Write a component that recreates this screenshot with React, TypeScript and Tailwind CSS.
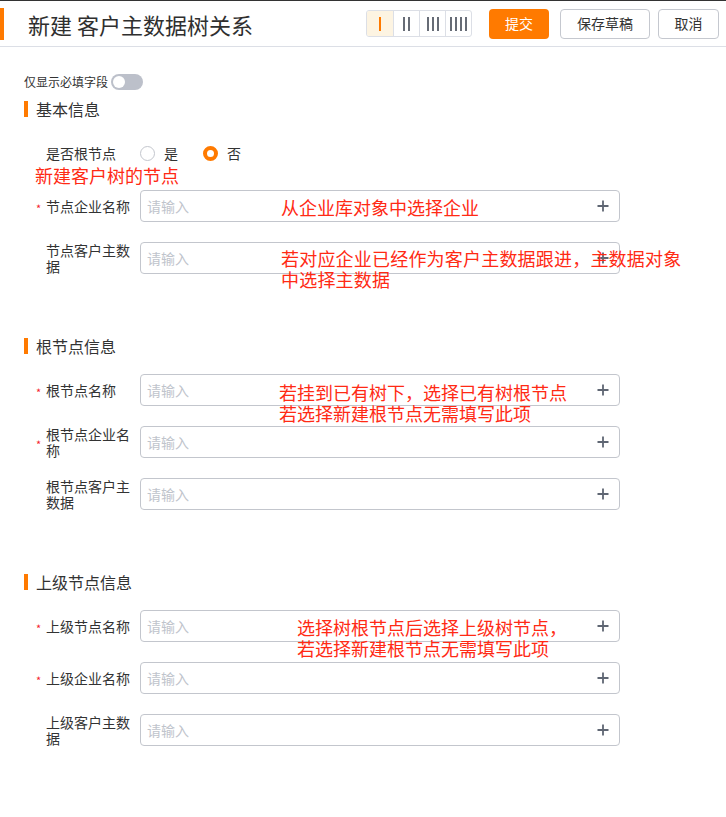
import React from 'react';

type Field = { label: string; required?: boolean };

const sections: { title: string; fields: Field[] }[] = [
  {
    title: '根节点信息',
    fields: [
      { label: '根节点名称', required: true },
      { label: '根节点企业名称', required: true },
      { label: '根节点客户主数据' },
    ],
  },
  {
    title: '上级节点信息',
    fields: [
      { label: '上级节点名称', required: true },
      { label: '上级企业名称', required: true },
      { label: '上级客户主数据' },
    ],
  },
];

function PlusIcon() {
  return (
    <svg width="12" height="12" viewBox="0 0 12 12" className="text-[#5f6673]">
      <path d="M6 0.5v11M0.5 6h11" stroke="currentColor" strokeWidth="1.8" fill="none" />
    </svg>
  );
}

function Label({ text, required }: { text: string; required?: boolean }) {
  return (
    <div className="w-[104px] flex items-center shrink-0">
      <span className="w-[10px] text-[11px] text-[#f5222d] leading-none translate-y-[2px]">{required ? '*' : ''}</span>
      <span className="w-[86px] text-[14px] leading-[16px] text-[#333]">{text}</span>
    </div>
  );
}

function InputRow({ field }: { field: Field }) {
  return (
    <div className="flex items-center h-[32px] mb-[20px]">
      <Label text={field.label} required={field.required} />
      <div className="w-[480px] h-[32px] border border-[#c3c6cd] rounded-[4px] flex items-center justify-between pl-[6px] pr-[10px]">
        <span className="text-[14px] text-[#c0c4cc]">请输入</span>
        <PlusIcon />
      </div>
    </div>
  );
}

function SectionTitle({ title, className }: { title: string; className?: string }) {
  return (
    <div className={`flex items-center h-[24px] ${className ?? ''}`}>
      <div className="w-[4px] h-[16px] bg-[#ff7a00]" />
      <span className="ml-[8px] text-[16px] text-[#333]">{title}</span>
    </div>
  );
}

function Bars({ n, active }: { n: number; active?: boolean }) {
  return (
    <div className="flex gap-[3px]">
      {Array.from({ length: n }).map((_, i) => (
        <div key={i} className={`w-[2px] h-[14px] ${active ? 'bg-[#ff7a00]' : 'bg-[#676c76]'}`} />
      ))}
    </div>
  );
}

export default function App() {
  return (
    <div className="relative min-h-screen bg-white font-['Noto_Sans_CJK_SC',sans-serif] text-[#333]">
      {/* header */}
      <div className="h-[47px] border-t border-t-[#333] border-b border-b-[#dcdfe6] flex items-center">
        <div className="w-[4px] h-[32px] bg-[#ff7a00]" />
        <h1 className="ml-[24px] text-[22px] text-[#2f2f2f] leading-none">新建 客户主数据树关系</h1>
        <div className="flex-1" />
        <div className="flex h-[27px] border border-[#dcdfe6] rounded-[3px] overflow-hidden">
          <div className="w-[26px] flex items-center justify-center bg-[#fdf4e2]">
            <Bars n={1} active />
          </div>
          <div className="w-[26px] flex items-center justify-center border-l border-[#dcdfe6]">
            <Bars n={2} />
          </div>
          <div className="w-[26px] flex items-center justify-center border-l border-[#dcdfe6]">
            <Bars n={3} />
          </div>
          <div className="w-[26px] flex items-center justify-center border-l border-[#dcdfe6]">
            <Bars n={4} />
          </div>
        </div>
        <button className="ml-[17px] w-[60px] h-[30px] rounded-[4px] bg-[#ff7a00] text-white text-[14px]">提交</button>
        <button className="ml-[11px] w-[90px] h-[30px] rounded-[4px] border border-[#c5c8cf] text-[#333] text-[14px]">保存草稿</button>
        <button className="ml-[8px] mr-[7px] w-[61px] h-[30px] rounded-[4px] border border-[#c5c8cf] text-[#333] text-[14px]">取消</button>
      </div>

      <div className="pl-[24px]">
        <div className="mt-[27px] h-[16px] flex items-center">
          <span className="text-[12px] text-[#333]">仅显示必填字段</span>
          <div className="ml-[3px] w-[32px] h-[16px] rounded-full bg-[#bcc0ca] flex items-center px-[2px]">
            <div className="w-[12px] h-[12px] rounded-full bg-white" />
          </div>
        </div>

        <SectionTitle title="基本信息" className="mt-[7px]" />
        <div className="mt-[16px] pl-[12px]">
          <div className="flex items-center h-[32px] mb-[21px]">
            <Label text="是否根节点" />
            <div className="flex items-center">
              <div className="w-[15px] h-[15px] rounded-full border border-[#c3c6cd]" />
              <span className="ml-[9px] text-[14px]">是</span>
              <div className="ml-[25px] w-[15px] h-[15px] rounded-full border-[4px] border-[#ff7a00] bg-white" />
              <span className="ml-[9px] text-[14px]">否</span>
            </div>
          </div>
          <InputRow field={{ label: '节点企业名称', required: true }} />
          <InputRow field={{ label: '节点客户主数据' }} />
        </div>

        {sections.map((s) => (
          <div key={s.title}>
            <SectionTitle title={s.title} className="mt-[60px]" />
            <div className="mt-[16px] pl-[12px]">
              {s.fields.map((f) => (
                <InputRow key={f.label} field={f} />
              ))}
            </div>
          </div>
        ))}
        <div className="h-[50px]" />
      </div>

      {/* red annotations */}
      <div className="absolute left-[35px] top-[165px] text-[18px] leading-[21px] text-[#ff2a14]">新建客户树的节点</div>
      <div className="absolute left-[281px] top-[197px] text-[18px] leading-[21px] text-[#ff2a14]">从企业库对象中选择企业</div>
      <div className="absolute left-[281px] top-[248px] text-[18px] leading-[21px] text-[#ff2a14] tracking-[0.2px]">
        若对应企业已经作为客户主数据跟进，主数据对象
        <br />
        中选择主数据
      </div>
      <div className="absolute left-[279px] top-[382px] text-[18px] leading-[21px] text-[#ff2a14]">
        若挂到已有树下，选择已有树根节点
        <br />
        若选择新建根节点无需填写此项
      </div>
      <div className="absolute left-[297px] top-[617px] text-[18px] leading-[21px] text-[#ff2a14]">
        选择树根节点后选择上级树节点，
        <br />
        若选择新建根节点无需填写此项
      </div>
    </div>
  );
}
